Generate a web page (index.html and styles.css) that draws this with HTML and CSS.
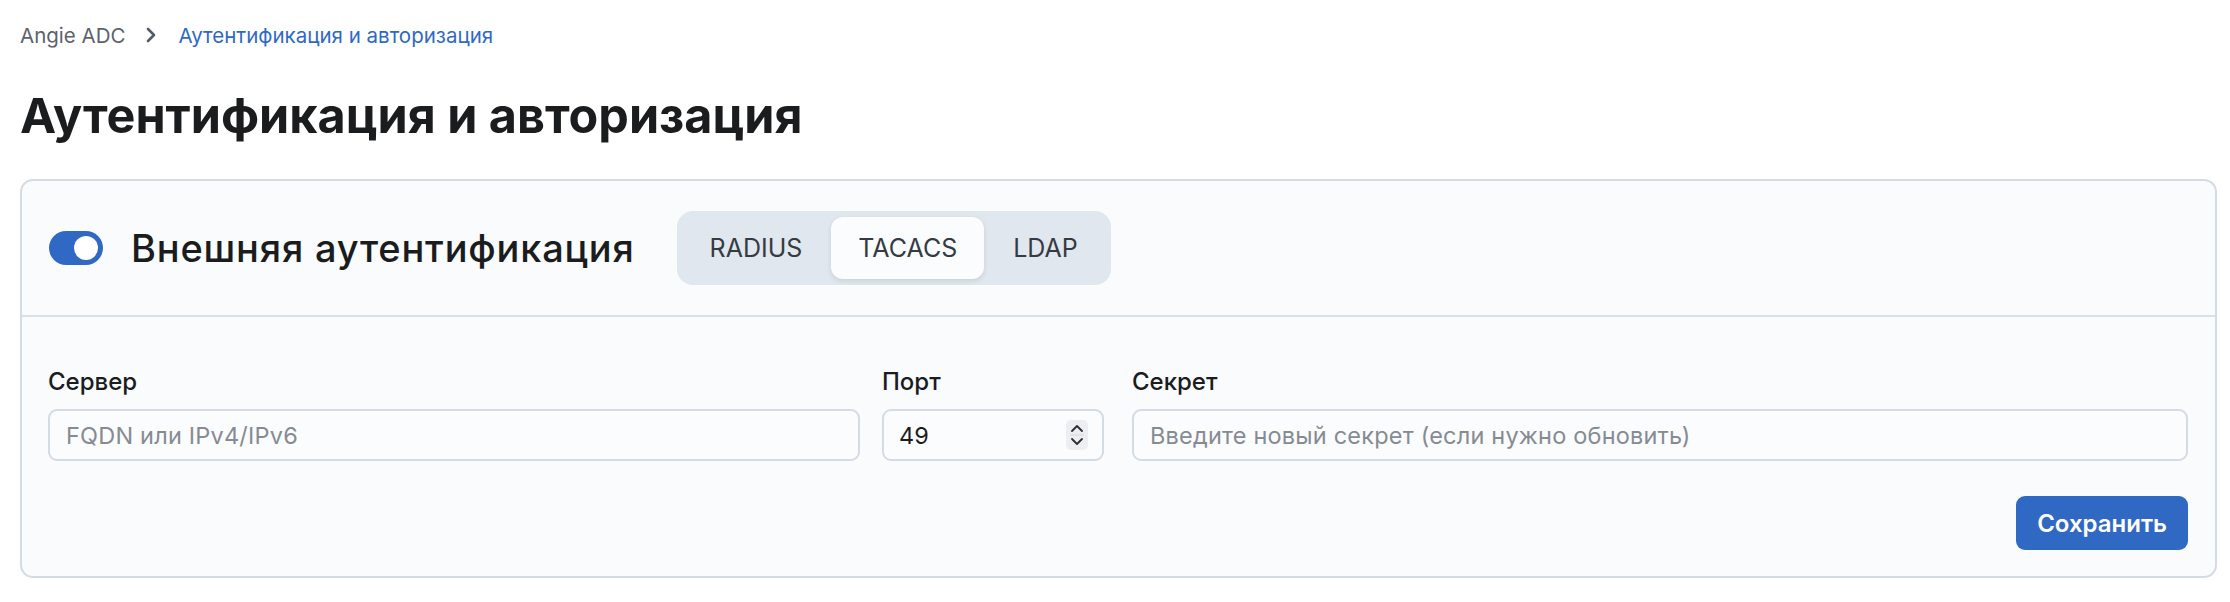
FILE: index.html
```html
<!DOCTYPE html>
<html lang="ru">

<head>
    <meta charset="utf-8">
    <title>Аутентификация и авторизация</title>
    <link rel="stylesheet" href="styles.css">
</head>

<body>
    <div class="page">
        <nav class="crumbs">
            <span class="crumb">Angie ADC</span>
            <svg class="crumb-sep" width="12" height="18" viewBox="0 0 12 18">
                <path d="M3 3 L9 9 L3 15" fill="none" stroke="#535b64" stroke-width="2.6" stroke-linecap="round" stroke-linejoin="round"/>
            </svg>
            <span class="crumb crumb-current">Аутентификация и авторизация</span>
        </nav>

        <h1 class="page-title">Аутентификация и авторизация</h1>

        <section class="card">
            <header class="card-head">
                <span class="toggle"><span class="toggle-knob"></span></span>
                <h2 class="card-title">Внешняя аутентификация</h2>
                <div class="segments">
                    <button type="button" class="segment">RADIUS</button>
                    <button type="button" class="segment active">TACACS</button>
                    <button type="button" class="segment">LDAP</button>
                </div>
            </header>

            <div class="card-body">
                <div class="fields">
                    <label class="field">
                        <span class="field-label">Сервер</span>
                        <input class="input" type="text" placeholder="FQDN или IPv4/IPv6">
                    </label>
                    <label class="field">
                        <span class="field-label">Порт</span>
                        <span class="input number">
                            <input class="number-value" type="text" value="49">
                            <svg class="spin" width="22" height="30" viewBox="0 0 22 30">
                                <rect x="0" y="0" width="22" height="30" rx="5" fill="#eceef2"/>
                                <path d="M6 11 L11 6 L16 11" fill="none" stroke="#2b2f35" stroke-width="1.8" stroke-linecap="round" stroke-linejoin="round"/>
                                <line x1="4" y1="15" x2="18" y2="15" stroke="#d6d9de" stroke-width="1"/>
                                <path d="M6 19 L11 24 L16 19" fill="none" stroke="#2b2f35" stroke-width="1.8" stroke-linecap="round" stroke-linejoin="round"/>
                            </svg>
                        </span>
                    </label>
                    <label class="field field-secret">
                        <span class="field-label">Секрет</span>
                        <input class="input" type="password" placeholder="Введите новый секрет (если нужно обновить)">
                    </label>
                </div>
                <div class="actions">
                    <button type="button" class="btn-primary">Сохранить</button>
                </div>
            </div>
        </section>
    </div>
</body>

</html>
```

FILE: styles.css
```css
html {
    background: #fff;
}

body {
    margin: 0;
    color: #1b1c1e;
    font-family: Inter, "Noto Sans", sans-serif;
}

.page {
    padding: 20px 13px 0 20px;
}

/* breadcrumbs */
.crumbs {
    display: flex;
    align-items: center;
    height: 30px;
    font-size: 20.5px;
}

.crumb {
    color: #5c636c;
}

.crumb-sep {
    margin: 0 21px 0 20px;
}

.crumb-current {
    color: #2f69c4;
}

.page-title {
    margin: 37px 0 34px;
    font-size: 48.5px;
    font-weight: 700;
    line-height: 1.2;
    color: #1b1c1e;
}

/* card */
.card {
    background: #f9fbfd;
    border: 2px solid #d3dbe5;
    border-radius: 13px;
}

.card-head {
    display: flex;
    align-items: center;
    height: 134px;
    padding: 0 27px;
    border-bottom: 2px solid #d9e0e8;
}

.toggle {
    display: flex;
    align-items: center;
    justify-content: flex-end;
    width: 54px;
    height: 34px;
    padding: 0 5px;
    box-sizing: border-box;
    border-radius: 17px;
    background: #2f69c4;
}

.toggle-knob {
    width: 24px;
    height: 24px;
    border-radius: 50%;
    background: #fff;
}

.card-title {
    margin: 0 42px 0 28px;
    font-size: 38px;
    font-weight: 500;
    letter-spacing: 0.8px;
    color: #1b1c1e;
}

.segments {
    display: flex;
    gap: 2px;
    padding: 6px;
    border-radius: 16px;
    background: #e1e7ee;
}

.segment {
    height: 62px;
    padding: 0 27px;
    border: 0;
    border-radius: 12px;
    background: transparent;
    color: #353b43;
    font-family: inherit;
    font-size: 25px;
}

.segment.active {
    background: #fbfcfd;
    box-shadow: 0 2px 5px rgba(30, 40, 60, 0.12);
}

.card-body {
    padding: 50px 27px 26px 26px;
}

.fields {
    display: grid;
    grid-template-columns: 812px 222px 1fr;
    column-gap: 22px;
}

.field {
    display: flex;
    flex-direction: column;
    gap: 12px;
}

.field-secret {
    margin-left: 6px;
}

.field-label {
    font-size: 24px;
    font-weight: 500;
    line-height: 30px;
    color: #1b1c1e;
}

.input {
    height: 52px;
    box-sizing: border-box;
    padding: 0 16px;
    border: 2px solid #d3dbe5;
    border-radius: 9px;
    background: #fbfcfe;
    font-family: inherit;
    font-size: 23.5px;
    letter-spacing: 0.2px;
    color: #1b1c1e;
    outline: none;
}

.input::placeholder {
    color: #868b93;
}

.number {
    display: flex;
    align-items: center;
    padding: 0 14px 0 15px;
}

.number-value {
    flex: 1;
    min-width: 0;
    border: 0;
    padding: 0;
    background: transparent;
    font-family: inherit;
    font-size: 23.5px;
    color: #1b1c1e;
    outline: none;
}

.actions {
    display: flex;
    justify-content: flex-end;
    margin-top: 35px;
}

.btn-primary {
    height: 54px;
    padding: 0 21px;
    border: 0;
    border-radius: 9px;
    background: #2f69c4;
    color: #fff;
    font-family: inherit;
    font-size: 24px;
    font-weight: 600;
    cursor: pointer;
}
```
